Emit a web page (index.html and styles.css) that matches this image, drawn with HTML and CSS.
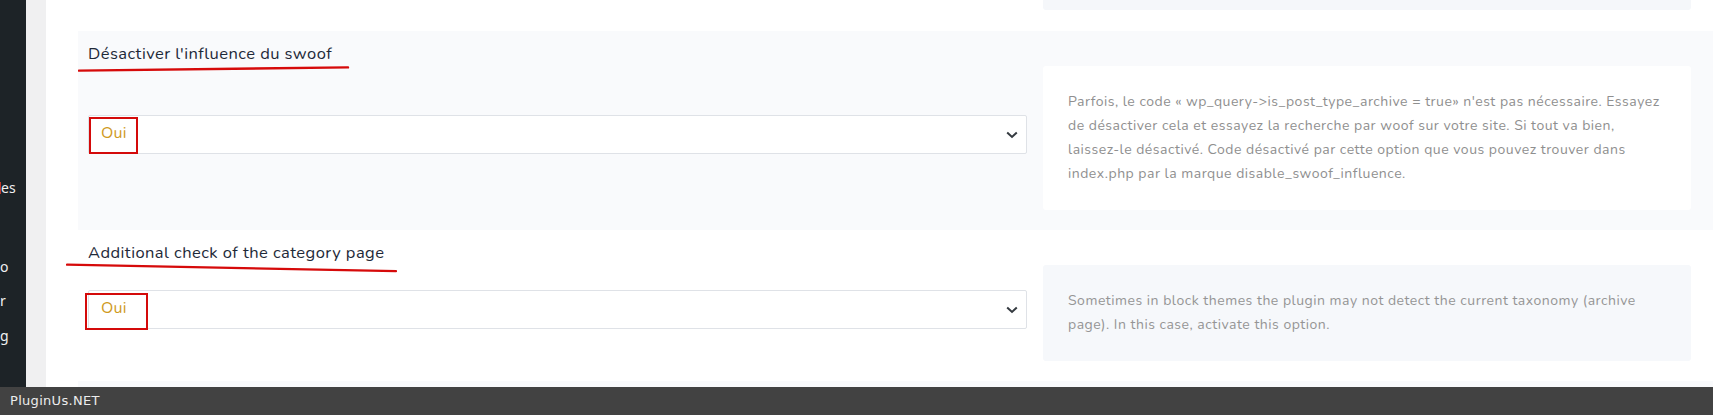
FILE: index.html
```html
<!DOCTYPE html>
<html lang="fr">
<head>
<meta charset="utf-8">
<title>Options</title>
<link rel="stylesheet" href="styles.css">
</head>
<body>
<div class="page">
  <div class="top">
    <nav class="sidebar">
      <span class="menu-item m-es"><i class="red-dot"></i>es</span>
      <span class="menu-item m-o">o</span>
      <span class="menu-item m-r">r</span>
      <span class="menu-item m-g">g</span>
    </nav>
    <div class="gutter"></div>
    <main class="main">
      <section class="opt opt-prev">
        <div class="grid">
          <div></div>
          <div class="desc-tail"></div>
        </div>
      </section>

      <section class="opt opt-tinted opt-1">
        <div class="grid">
          <h3 class="title">Désactiver l'influence du swoof</h3>
          <div></div>
          <div class="field">
            <div class="select"><span class="value">Oui</span>
              <svg class="chev" width="12" height="8" viewBox="0 0 12 8"><path d="M1.2 1.5 L6 6 L10.8 1.5" fill="none" stroke="#343a40" stroke-width="2"/></svg>
            </div>
          </div>
          <div class="desc desc-light">Parfois, le code « wp_query-&gt;is_post_type_archive = true» n'est pas nécessaire. Essayez<br>de désactiver cela et essayez la recherche par woof sur votre site. Si tout va bien,<br>laissez-le désactivé. Code désactivé par cette option que vous pouvez trouver dans<br>index.php par la marque disable_swoof_influence.</div>
        </div>
        <svg class="mark mark-1" width="272" height="8" viewBox="0 0 272 8"><path d="M1 5.6 L270 2.4" stroke="#d60a0a" stroke-width="2.4" stroke-linecap="round"/></svg>
        <span class="box-mark box-1"></span>
      </section>

      <section class="opt opt-2">
        <div class="grid">
          <h3 class="title">Additional check of the category page</h3>
          <div></div>
          <div class="field">
            <div class="select"><span class="value">Oui</span>
              <svg class="chev" width="12" height="8" viewBox="0 0 12 8"><path d="M1.2 1.5 L6 6 L10.8 1.5" fill="none" stroke="#343a40" stroke-width="2"/></svg>
            </div>
          </div>
          <div class="desc desc-grey">Sometimes in block themes the plugin may not detect the current taxonomy (archive<br>page). In this case, activate this option.</div>
        </div>
        <svg class="mark mark-2" width="332" height="10" viewBox="0 0 332 10"><path d="M1 1.6 L330 8.2" stroke="#d60a0a" stroke-width="2.2" stroke-linecap="round"/></svg>
        <span class="box-mark box-2"></span>
      </section>

      <section class="opt opt-tinted opt-3"></section>
    </main>
  </div>
  <footer class="footer">PluginUs.NET</footer>
</div>
</body>
</html>
```

FILE: styles.css
```css
* { box-sizing: border-box; }
html, body { margin: 0; padding: 0; }
body {
  width: 1713px;
  height: 415px;
  overflow: hidden;
  background: #fff;
  font-family: "Nunito", "Lato", "Open Sans", sans-serif;
}
.page {
  display: flex;
  flex-direction: column;
  height: 415px;
}
.top {
  display: flex;
  height: 387px;
  overflow: hidden;
}
.sidebar {
  width: 26px;
  flex: 0 0 26px;
  background: #1d2327;
  color: #f0f0f1;
  font-family: "Noto Sans", "Liberation Sans", sans-serif;
  font-size: 14px;
  display: flex;
  flex-direction: column;
  overflow: hidden;
  padding-top: 178px;
}
.menu-item {
  display: block;
  height: 20px;
  line-height: 20px;
  white-space: nowrap;
  position: relative;
}
.m-es { margin-bottom: 59px; padding-left: 0; }
.m-o { margin-bottom: 14px; }
.m-r { margin-bottom: 15px; }
.red-dot {
  display: inline-block;
  width: 1px;
  height: 12px;
  background: #c0392b;
  vertical-align: -1px;
}
.gutter {
  width: 20px;
  flex: 0 0 20px;
  background: #f0f0f1;
}
.main {
  flex: 1;
  padding-left: 32px;
  display: flex;
  flex-direction: column;
}
.opt {
  position: relative;
  padding: 12px 22px 20px 10px;
}
.opt-tinted { background: #f9fafc; }
.grid {
  display: grid;
  grid-template-columns: 939px 648px;
  column-gap: 16px;
}
.opt-prev { padding: 0 22px 21px 10px; }
.desc-tail {
  height: 10px;
  background: #f5f7fa;
  border-radius: 0 0 3px 3px;
}
.title {
  margin: 0;
  font-size: 16.5px;
  line-height: 22px;
  font-weight: 400;
  color: #1e2938;
  letter-spacing: 0.45px;
}
.field {
  display: flex;
  align-items: center;
  padding-bottom: 7px;
}
.select {
  width: 100%;
  height: 39px;
  border: 1px solid #dfe2e7;
  border-radius: 2px;
  background: #fff;
  display: flex;
  align-items: center;
  justify-content: space-between;
  padding: 0 8px 0 12px;
}
.value {
  color: #cf9a1e;
  font-size: 16px;
  line-height: 20px;
  margin-top: -2px;
  letter-spacing: 0.3px;
}
.chev { display: block; margin-top: 1px; }
.desc {
  margin-top: 1px;
  padding: 24px 25px;
  font-size: 14px;
  line-height: 24px;
  color: #8f8f8f;
  white-space: nowrap;
  border-radius: 3px;
  letter-spacing: 0.5px;
}
.desc-light { background: #fff; }
.desc-grey { background: #f6f8fb; color: #959595; }
.opt-3 { flex: 1; }

.mark { position: absolute; display: block; }
.mark-1 { left: 0; top: 34px; }
.mark-2 { left: -12px; top: 33px; }
.box-mark {
  position: absolute;
  border: 2px solid #d40a0a;
}
.box-1 { left: 11px; top: 86px; width: 49px; height: 37px; }
.box-2 { left: 7px; top: 63px; width: 63px; height: 37px; }

.footer {
  height: 28px;
  flex: 0 0 28px;
  background: #424242;
  color: #ececec;
  font-family: "DejaVu Sans", sans-serif;
  font-size: 13px;
  line-height: 28px;
  padding-left: 10px;
  letter-spacing: 0.3px;
}
```
